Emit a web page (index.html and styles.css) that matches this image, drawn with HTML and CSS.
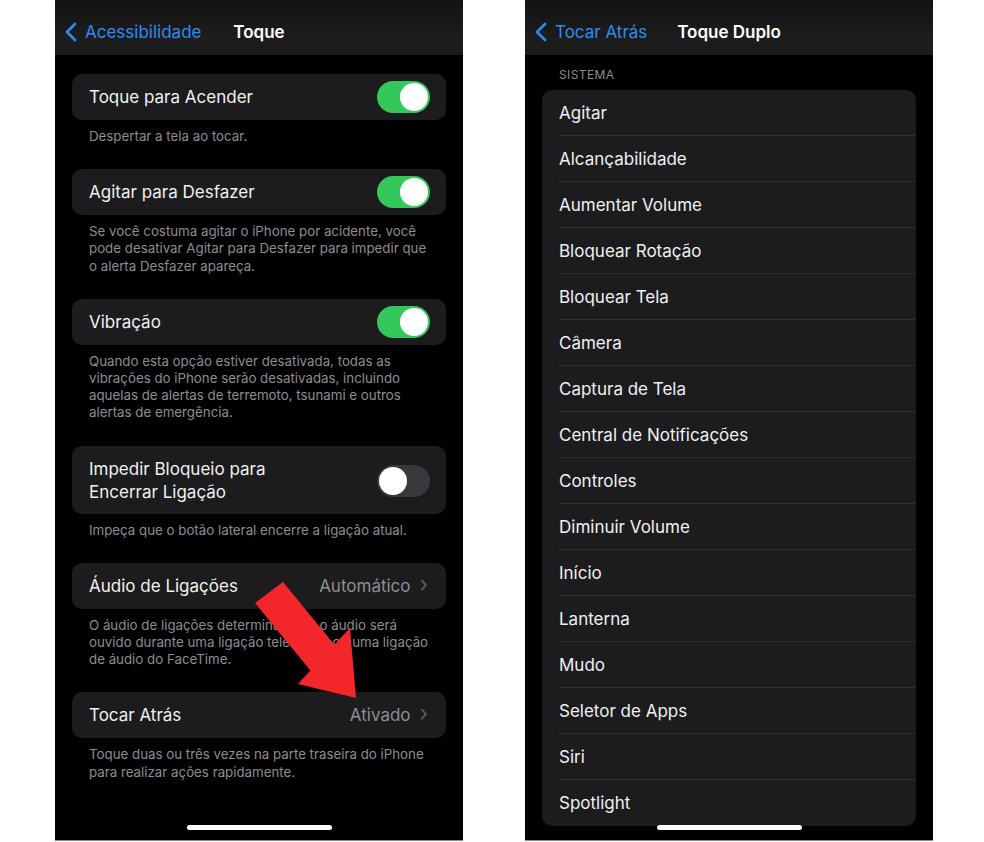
FILE: index.html
```html
<!DOCTYPE html>
<html lang="pt-BR">
<head>
<meta charset="utf-8">
<title>Toque / Toque Duplo</title>
<link rel="stylesheet" href="styles.css">
</head>
<body>
<div class="stage">
  <section class="phone">
    <header class="nav">
      <div class="back">
        <svg class="chev" width="13" height="20" viewBox="0 0 13 20"><path d="M11 2 L3 10 L11 18" fill="none" stroke="#2e8cf0" stroke-width="2.6" stroke-linecap="round" stroke-linejoin="round"/></svg>
        <span>Acessibilidade</span>
      </div>
      <div class="title">Toque</div>
      <div></div>
    </header>
    <main class="content">
      <div class="card"><span class="label">Toque para Acender</span><span class="toggle on"></span></div>
      <p class="foot">Despertar a tela ao tocar.</p>

      <div class="card"><span class="label">Agitar para Desfazer</span><span class="toggle on"></span></div>
      <p class="foot">Se você costuma agitar o iPhone por acidente, você<br>pode desativar Agitar para Desfazer para impedir que<br>o alerta Desfazer apareça.</p>

      <div class="card"><span class="label">Vibração</span><span class="toggle on"></span></div>
      <p class="foot">Quando esta opção estiver desativada, todas as<br>vibrações do iPhone serão desativadas, incluindo<br>aquelas de alertas de terremoto, tsunami e outros<br>alertas de emergência.</p>

      <div class="card tall"><span class="label">Impedir Bloqueio para<br>Encerrar Ligação</span><span class="toggle"></span></div>
      <p class="foot">Impeça que o botão lateral encerre a ligação atual.</p>

      <div class="card"><span class="label">Áudio de Ligações</span><span class="value">Automático<i class="gt">›</i></span></div>
      <p class="foot">O áudio de ligações determina onde o áudio será<br>ouvido durante uma ligação telefônica ou uma ligação<br>de áudio do FaceTime.</p>

      <div class="card"><span class="label">Tocar Atrás</span><span class="value">Ativado<i class="gt">›</i></span></div>
      <p class="foot">Toque duas ou três vezes na parte traseira do iPhone<br>para realizar ações rapidamente.</p>
    </main>
    <svg class="arrow" width="408" height="840" viewBox="0 0 408 840"><polygon points="200,603 228,582 279.4,644.8 295,628 301,698 243,684 255.4,670.6" fill="#f2262b"/></svg>
    <div class="home"></div>
  </section>

  <section class="phone">
    <header class="nav">
      <div class="back">
        <svg class="chev" width="13" height="20" viewBox="0 0 13 20"><path d="M11 2 L3 10 L11 18" fill="none" stroke="#2e8cf0" stroke-width="2.6" stroke-linecap="round" stroke-linejoin="round"/></svg>
        <span>Tocar Atrás</span>
      </div>
      <div class="title">Toque Duplo</div>
      <div></div>
    </header>
    <main class="content list-wrap">
      <div class="section">SISTEMA</div>
      <ul class="list">
        <li>Agitar</li>
        <li>Alcançabilidade</li>
        <li>Aumentar Volume</li>
        <li>Bloquear Rotação</li>
        <li>Bloquear Tela</li>
        <li>Câmera</li>
        <li>Captura de Tela</li>
        <li>Central de Notificações</li>
        <li>Controles</li>
        <li>Diminuir Volume</li>
        <li>Início</li>
        <li>Lanterna</li>
        <li>Mudo</li>
        <li>Seletor de Apps</li>
        <li>Siri</li>
        <li>Spotlight</li>
      </ul>
    </main>
    <div class="home"></div>
  </section>
</div>
</body>
</html>
```
FILE: styles.css
```css
* { box-sizing: border-box; }
html, body { margin: 0; padding: 0; background: #fff; }
body { font-family: Inter, "Noto Sans", "Liberation Sans", sans-serif; }

.stage {
  display: flex;
  gap: 62px;
  padding-left: 55px;
}

.phone {
  position: relative;
  width: 408px;
  height: 841px;
  background: #000;
  overflow: hidden;
  border-bottom: 1px solid #8c8c8c;
  color: #f2f2f2;
}

.nav {
  height: 55px;
  padding-top: 8px;
  display: grid;
  grid-template-columns: 1fr auto 1fr;
  align-items: center;
  background: linear-gradient(#121212, #1d1d1e 70%, #1b1b1c);
}
.back {
  display: flex;
  align-items: center;
  gap: 8px;
  padding-left: 9px;
  color: #2e8cf0;
  font-size: 17px;
  white-space: nowrap;
}
.chev { display: block; }
.title {
  font-size: 17px;
  font-weight: 600;
  color: #fff;
}

.content { padding: 19px 17px 0; }

.card {
  display: flex;
  align-items: center;
  justify-content: space-between;
  height: 46px;
  padding: 0 16px 0 17px;
  background: #1c1c1e;
  border-radius: 10px;
  font-size: 17px;
}
.card.tall {
  height: 68px;
  line-height: 23px;
  padding-top: 2px;
}
.label { color: #f0f0f0; }

.toggle {
  position: relative;
  width: 53px;
  height: 32px;
  border-radius: 16px;
  background: #39393d;
  flex: none;
}
.toggle::after {
  content: "";
  position: absolute;
  top: 2px;
  left: 2px;
  width: 28px;
  height: 28px;
  border-radius: 50%;
  background: #fff;
}
.toggle.on { background: #34c759; }
.toggle.on::after { left: 23px; }

.value {
  color: #8e8e93;
  display: flex;
  align-items: center;
}
.gt {
  font-style: normal;
  color: #5c5c60;
  font-size: 22px;
  margin-left: 9px;
  margin-right: 2px;
  line-height: 1;
  position: relative;
  top: -2px;
}

.foot {
  margin: 0 0 24px;
  padding: 8px 17px 0;
  font-size: 13.3px;
  line-height: 17.2px;
  color: #8d8d93;
  white-space: nowrap;
}

.arrow {
  position: absolute;
  left: 0;
  top: 0;
}

.home {
  position: absolute;
  left: 132px;
  bottom: 10px;
  width: 145px;
  height: 5px;
  border-radius: 3px;
  background: #fff;
}

.list-wrap { padding-top: 12px; }
.section {
  padding-left: 17px;
  font-size: 12px;
  letter-spacing: 0.4px;
  line-height: 16px;
  color: #8e8e93;
  margin-bottom: 7px;
}
.list {
  list-style: none;
  margin: 0;
  padding: 0 0 0 17px;
  background: #1c1c1e;
  border-radius: 10px;
}
.list li {
  height: 46px;
  display: flex;
  align-items: center;
  font-size: 17px;
  color: #f0f0f0;
  border-bottom: 1px solid #2c2c2e;
}
.list li:last-child { border-bottom: 0; }
```
